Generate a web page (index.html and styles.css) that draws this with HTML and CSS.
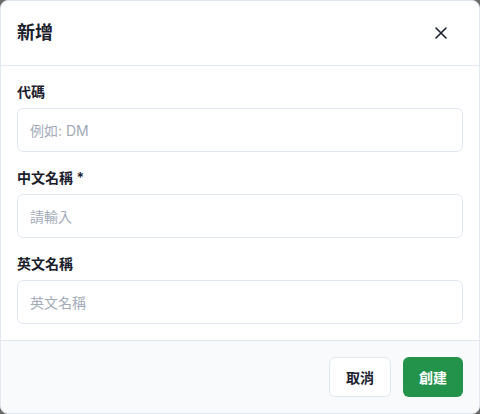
FILE: index.html
```html
<!DOCTYPE html>
<html lang="zh-Hant">
<head>
<meta charset="utf-8">
<link rel="stylesheet" href="styles.css">
</head>
<body>
<div class="dialog">
  <header class="dialog-header">
    <h2 class="dialog-title">新增</h2>
    <button class="close-btn" aria-label="close">
      <svg width="12" height="12" viewBox="0 0 12 12"><path d="M1 1L11 11M11 1L1 11" stroke="#1a202c" stroke-width="1.6" stroke-linecap="round"/></svg>
    </button>
  </header>
  <div class="dialog-body">
    <div class="field">
      <label class="field-label">代碼</label>
      <input class="field-input" placeholder="例如: DM">
    </div>
    <div class="field">
      <label class="field-label">中文名稱 *</label>
      <input class="field-input" placeholder="請輸入">
    </div>
    <div class="field">
      <label class="field-label">英文名稱</label>
      <input class="field-input" placeholder="英文名稱">
    </div>
  </div>
  <footer class="dialog-footer">
    <button class="btn btn-secondary">取消</button>
    <button class="btn btn-primary">創建</button>
  </footer>
</div>
</body>
</html>
```
FILE: styles.css
```css
* { box-sizing: border-box; }
html, body { margin: 0; padding: 0; }
body {
  background: #6b6b6b;
  font-family: "Inter", "Noto Sans CJK TC", sans-serif;
  color: #1a202c;
}
.dialog {
  width: 480px;
  height: 414px;
  background: #fff;
  border: 1px solid #e2e8f0;
  border-radius: 8px;
  overflow: hidden;
  display: flex;
  flex-direction: column;
}
.dialog-header {
  display: flex;
  align-items: center;
  justify-content: space-between;
  padding: 16px 16px;
  border-bottom: 1px solid #e2e8f0;
  height: 65px;
}
.dialog-title {
  margin: 0;
  font-size: 18px;
  font-weight: 700;
  line-height: 32px;
}
.close-btn {
  width: 32px;
  height: 32px;
  border: none;
  background: transparent;
  display: flex;
  align-items: center;
  justify-content: center;
  padding: 0;
  margin-right: 6px;
}
.dialog-body {
  padding: 16px 16px;
  display: flex;
  flex-direction: column;
  gap: 16px;
  border-bottom: 1px solid #e2e8f0;
}
.field { display: flex; flex-direction: column; gap: 6px; }
.field-label {
  font-size: 14px;
  font-weight: 600;
  line-height: 20px;
}
.field-input {
  height: 44px;
  border: 1px solid #e2e8f0;
  border-radius: 6px;
  padding: 0 12px;
  font-family: "Inter", "Noto Sans CJK TC", sans-serif;
  font-size: 14px;
  color: #1a202c;
  background: #fff;
  outline: none;
}
.field-input::placeholder { color: #a3abb8; }
.dialog-footer {
  flex: 1;
  background: #f8fafc;
  display: flex;
  justify-content: flex-end;
  align-items: center;
  gap: 12px;
  padding: 0 16px;
}
.btn {
  height: 40px;
  padding: 0 16px;
  border-radius: 6px;
  font-family: "Inter", "Noto Sans CJK TC", sans-serif;
  font-size: 14px;
  font-weight: 700;
}
.btn-secondary {
  background: #fff;
  border: 1px solid #e2e8f0;
  color: #1a202c;
  width: 62px;
}
.btn-primary {
  background: #23924b;
  border: none;
  color: #fff;
  width: 60px;
}
```
